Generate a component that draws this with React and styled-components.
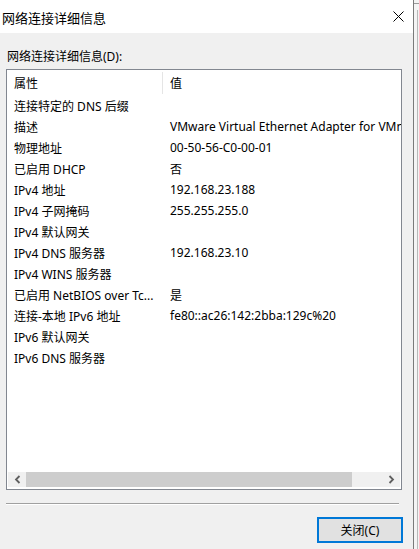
import React from "react";
import styled, { createGlobalStyle } from "styled-components";

const Global = createGlobalStyle`
  html, body { margin: 0; padding: 0; }
  body {
    width: 419px; height: 549px; overflow: hidden;
    background: #f3f3f3;
    font-family: "Noto Sans", "Noto Sans CJK SC", sans-serif;
    font-size: 12px; color: #000;
  }
`;

const Screen = styled.div`
  display: flex;
  width: 419px;
  height: 549px;
`;

const Dialog = styled.div`
  width: 413px;
  height: 549px;
  display: flex;
  flex-direction: column;
  background: #f0f0f0;
  border-right: 1px solid #7a7a7a;
  flex-shrink: 0;
`;

const Behind = styled.div`
  flex: 1;
  background: #f4f4f4;
  border-top: 1px solid #9a9a9a;
  margin-top: 3px;
  display: flex;
  justify-content: flex-end;
`;

const BehindEdge = styled.div`
  width: 1px;
  margin-top: 6px;
  background: #b8b8b8;
  margin-right: 1px;
`;

const TitleBar = styled.div`
  height: 33px;
  background: #fff;
  display: flex;
  align-items: center;
  justify-content: space-between;
  padding-left: 2px;
  flex-shrink: 0;
`;

const Title = styled.span`
  font-size: 13px;
  font-family: "Noto Sans CJK SC", sans-serif;
  line-height: 1;
  margin-top: 2px;
`;

const CloseBtn = styled.div`
  width: 30px;
  height: 33px;
  display: flex;
  align-items: center;
  justify-content: center;
  margin-right: 0px;
`;

const Body = styled.div`
  flex: 1;
  display: flex;
  flex-direction: column;
  padding: 15px 0 0 6px;
`;

const Label = styled.div`
  padding-left: 1px;
  height: 21px;
  line-height: 18px;
  font-size: 12px;
`;

const ListBox = styled.div`
  width: 394px;
  height: 419px;
  border: 1px solid #828790;
  background: #fff;
  display: flex;
  flex-direction: column;
  overflow: hidden;
`;

const Rows = styled.div`
  flex: 1;
  display: flex;
  flex-direction: column;
  overflow: hidden;
`;

const Row = styled.div`
  display: flex;
  height: ${(p) => (p.$header ? 25 : 21)}px;
  align-items: center;
  white-space: nowrap;
  flex-shrink: 0;
`;

const Cell = styled.div`
  padding-left: 7px;
  box-sizing: border-box;
  ${(p) => (p.$first ? "width: 156px; flex-shrink: 0;" : "flex: 1;")}
  height: 100%;
  display: flex;
  align-items: center;
  border-right: ${(p) => (p.$sep ? "1px solid #e5e5e5" : "none")};
  overflow: hidden;
`;

const HeaderCell = styled(Cell)`
  padding-top: 0px;
  align-self: stretch;
  height: auto;
  margin: 2px 0 1px;
  padding-bottom: 0px;
`;

const ScrollBar = styled.div`
  height: 15px;
  margin: 0 0 2px 1px;
  width: 392px;
  background: #f0f0f0;
  display: flex;
  align-items: stretch;
  flex-shrink: 0;
`;

const Arrow = styled.div`
  width: 18px;
  display: flex;
  align-items: center;
  justify-content: center;
  flex-shrink: 0;
`;

const Thumb = styled.div`
  width: 326px;
  background: #cdcdcd;
  flex-shrink: 0;
`;

const Track = styled.div`
  flex: 1;
`;

const Separator = styled.div`
  width: 393px;
  height: 1px;
  background: #a0a0a0;
  margin-top: 13px;
  border-bottom: 1px solid #fff;
`;

const Footer = styled.div`
  display: flex;
  justify-content: flex-end;
  width: 397px;
  margin-top: 12px;
`;

const Button = styled.button`
  width: 86px;
  height: 26px;
  box-sizing: border-box;
  border: 2px solid #0078d7;
  background: #e1e1e1;
  font-family: "Noto Sans", "Noto Sans CJK SC", sans-serif;
  font-size: 12px;
  color: #000;
  padding: 0;
  display: flex;
  align-items: center;
  justify-content: center;
`;

const rows = [
  ["连接特定的 DNS 后缀", ""],
  ["描述", "VMware Virtual Ethernet Adapter for VMnet8"],
  ["物理地址", "00-50-56-C0-00-01"],
  ["已启用 DHCP", "否"],
  ["IPv4 地址", "192.168.23.188"],
  ["IPv4 子网掩码", "255.255.255.0"],
  ["IPv4 默认网关", ""],
  ["IPv4 DNS 服务器", "192.168.23.10"],
  ["IPv4 WINS 服务器", ""],
  ["已启用 NetBIOS over Tc...", "是"],
  ["连接-本地 IPv6 地址", "fe80::ac26:142:2bba:129c%20"],
  ["IPv6 默认网关", ""],
  ["IPv6 DNS 服务器", ""],
];

export default function App() {
  return (
    <>
      <Global />
      <Screen>
        <Dialog>
          <TitleBar>
            <Title>网络连接详细信息</Title>
            <CloseBtn>
              <svg width="11" height="11" viewBox="0 0 11 11">
                <path d="M0.5 0.5 L10.5 10.5 M10.5 0.5 L0.5 10.5" stroke="#000" strokeWidth="1" fill="none" />
              </svg>
            </CloseBtn>
          </TitleBar>
          <Body>
            <Label>网络连接详细信息(D):</Label>
            <ListBox>
              <Rows>
                <Row $header>
                  <HeaderCell $first $sep>属性</HeaderCell>
                  <HeaderCell>值</HeaderCell>
                </Row>
                {rows.map(([k, v]) => (
                  <Row key={k}>
                    <Cell $first>{k}</Cell>
                    <Cell>{v}</Cell>
                  </Row>
                ))}
              </Rows>
              <ScrollBar>
                <Arrow>
                  <svg width="7" height="9" viewBox="0 0 7 9">
                    <path d="M5.5 1 L2 4.5 L5.5 8" stroke="#606060" strokeWidth="1.8" fill="none" />
                  </svg>
                </Arrow>
                <Thumb />
                <Track />
                <Arrow>
                  <svg width="7" height="9" viewBox="0 0 7 9">
                    <path d="M1.5 1 L5 4.5 L1.5 8" stroke="#606060" strokeWidth="1.8" fill="none" />
                  </svg>
                </Arrow>
              </ScrollBar>
            </ListBox>
            <Separator />
            <Footer>
              <Button>关闭(C)</Button>
            </Footer>
          </Body>
        </Dialog>
        <Behind>
          <BehindEdge />
        </Behind>
      </Screen>
    </>
  );
}
